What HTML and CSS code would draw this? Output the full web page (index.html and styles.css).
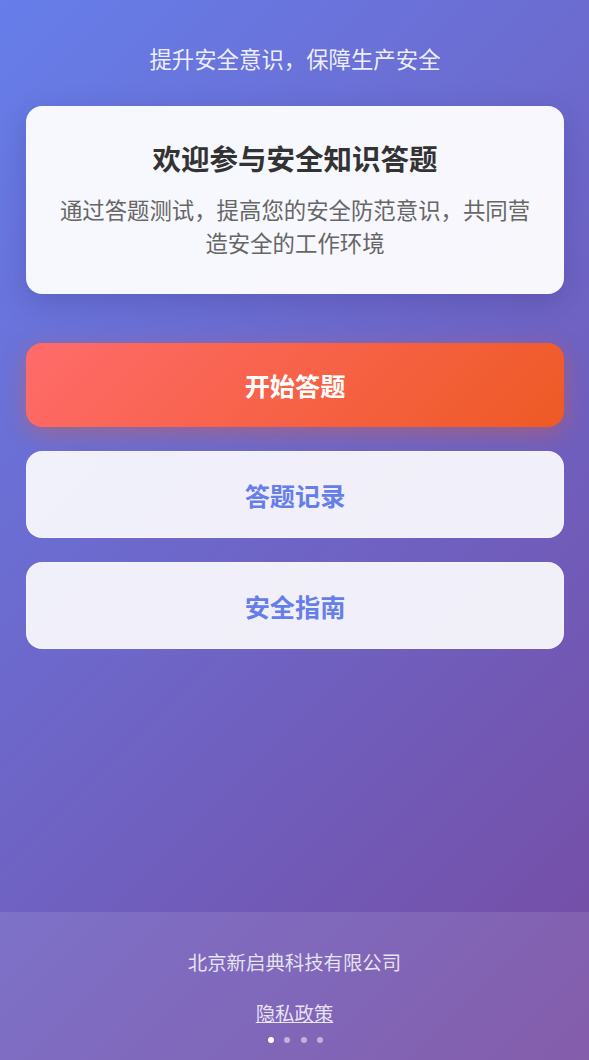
FILE: index.html
```html
<!DOCTYPE html>
<html lang="zh-CN">
<head>
<meta charset="utf-8">
<title>安全知识答题</title>
<link rel="stylesheet" href="styles.css">
</head>
<body>
<div class="page">
  <main class="main">
    <p class="slogan">提升安全意识，保障生产安全</p>
    <section class="welcome-card">
      <h1 class="welcome-title">欢迎参与安全知识答题</h1>
      <p class="welcome-desc">通过答题测试，提高您的安全防范意识，共同营造安全的工作环境</p>
    </section>
    <nav class="actions">
      <button class="btn btn-primary">开始答题</button>
      <button class="btn btn-light">答题记录</button>
      <button class="btn btn-light">安全指南</button>
    </nav>
  </main>
  <footer class="footer">
    <p class="company">北京新启典科技有限公司</p>
    <a class="privacy" href="#">隐私政策</a>
    <div class="dots">
      <span class="dot dot-active"></span>
      <span class="dot"></span>
      <span class="dot"></span>
      <span class="dot"></span>
    </div>
  </footer>
</div>
</body>
</html>
```
FILE: styles.css
```css
* { box-sizing: border-box; }
html, body { margin: 0; padding: 0; }
body {
  font-family: "Noto Sans CJK SC", "Noto Sans", sans-serif;
  background: linear-gradient(135deg, #667eea 0%, #764ba2 100%);
  min-height: 100vh;
}
.page {
  min-height: 100vh;
  display: flex;
  flex-direction: column;
}
.main {
  flex: 1;
  padding: 41px 25px 0 26px;
  display: flex;
  flex-direction: column;
}
.slogan {
  margin: 0;
  text-align: center;
  color: rgba(255, 255, 255, 0.9);
  font-size: 22.4px;
  line-height: 34px;
}
.welcome-card {
  margin-top: 31px;
  background: rgba(255, 255, 255, 0.95);
  border-radius: 16px;
  padding: 32px 24px 35px;
  text-align: center;
  box-shadow: 0 8px 28px rgba(40, 30, 110, 0.22);
}
.welcome-title {
  margin: 0;
  font-size: 28.5px;
  line-height: 40px;
  font-weight: 700;
  color: #333333;
}
.welcome-desc {
  margin: 15px 0 0;
  font-size: 22.4px;
  line-height: 33px;
  color: #666666;
}
.actions {
  margin-top: 49px;
  display: flex;
  flex-direction: column;
  gap: 24px;
}
.btn {
  display: block;
  width: 100%;
  border: none;
  border-radius: 16px;
  font-family: inherit;
  font-size: 25.2px;
  font-weight: 700;
  cursor: pointer;
}
.btn-primary {
  height: 84px;
  color: #ffffff;
  background: linear-gradient(135deg, #ff6b6b 0%, #ee5a24 100%);
  box-shadow: 0 6px 22px rgba(238, 90, 36, 0.4);
}
.btn-light {
  height: 87px;
  color: #667eea;
  background: rgba(255, 255, 255, 0.9);
  border: 1.5px solid rgba(255, 255, 255, 0.3);
}
.footer {
  background: rgba(255, 255, 255, 0.1);
  padding: 35px 0 17px;
  text-align: center;
  display: flex;
  flex-direction: column;
  align-items: center;
}
.company {
  margin: 0;
  color: rgba(255, 255, 255, 0.82);
  font-size: 19.4px;
  line-height: 29px;
}
.privacy {
  margin-top: 22px;
  color: rgba(255, 255, 255, 0.82);
  font-size: 19.4px;
  line-height: 29px;
  text-decoration: underline;
}
.dots {
  margin-top: 10px;
  display: flex;
  gap: 10.6px;
  justify-content: center;
  padding-left: 2px;
}
.dot {
  width: 6px;
  height: 6px;
  border-radius: 50%;
  background: rgba(255, 255, 255, 0.5);
}
.dot-active { background: #ffffff; }
```
